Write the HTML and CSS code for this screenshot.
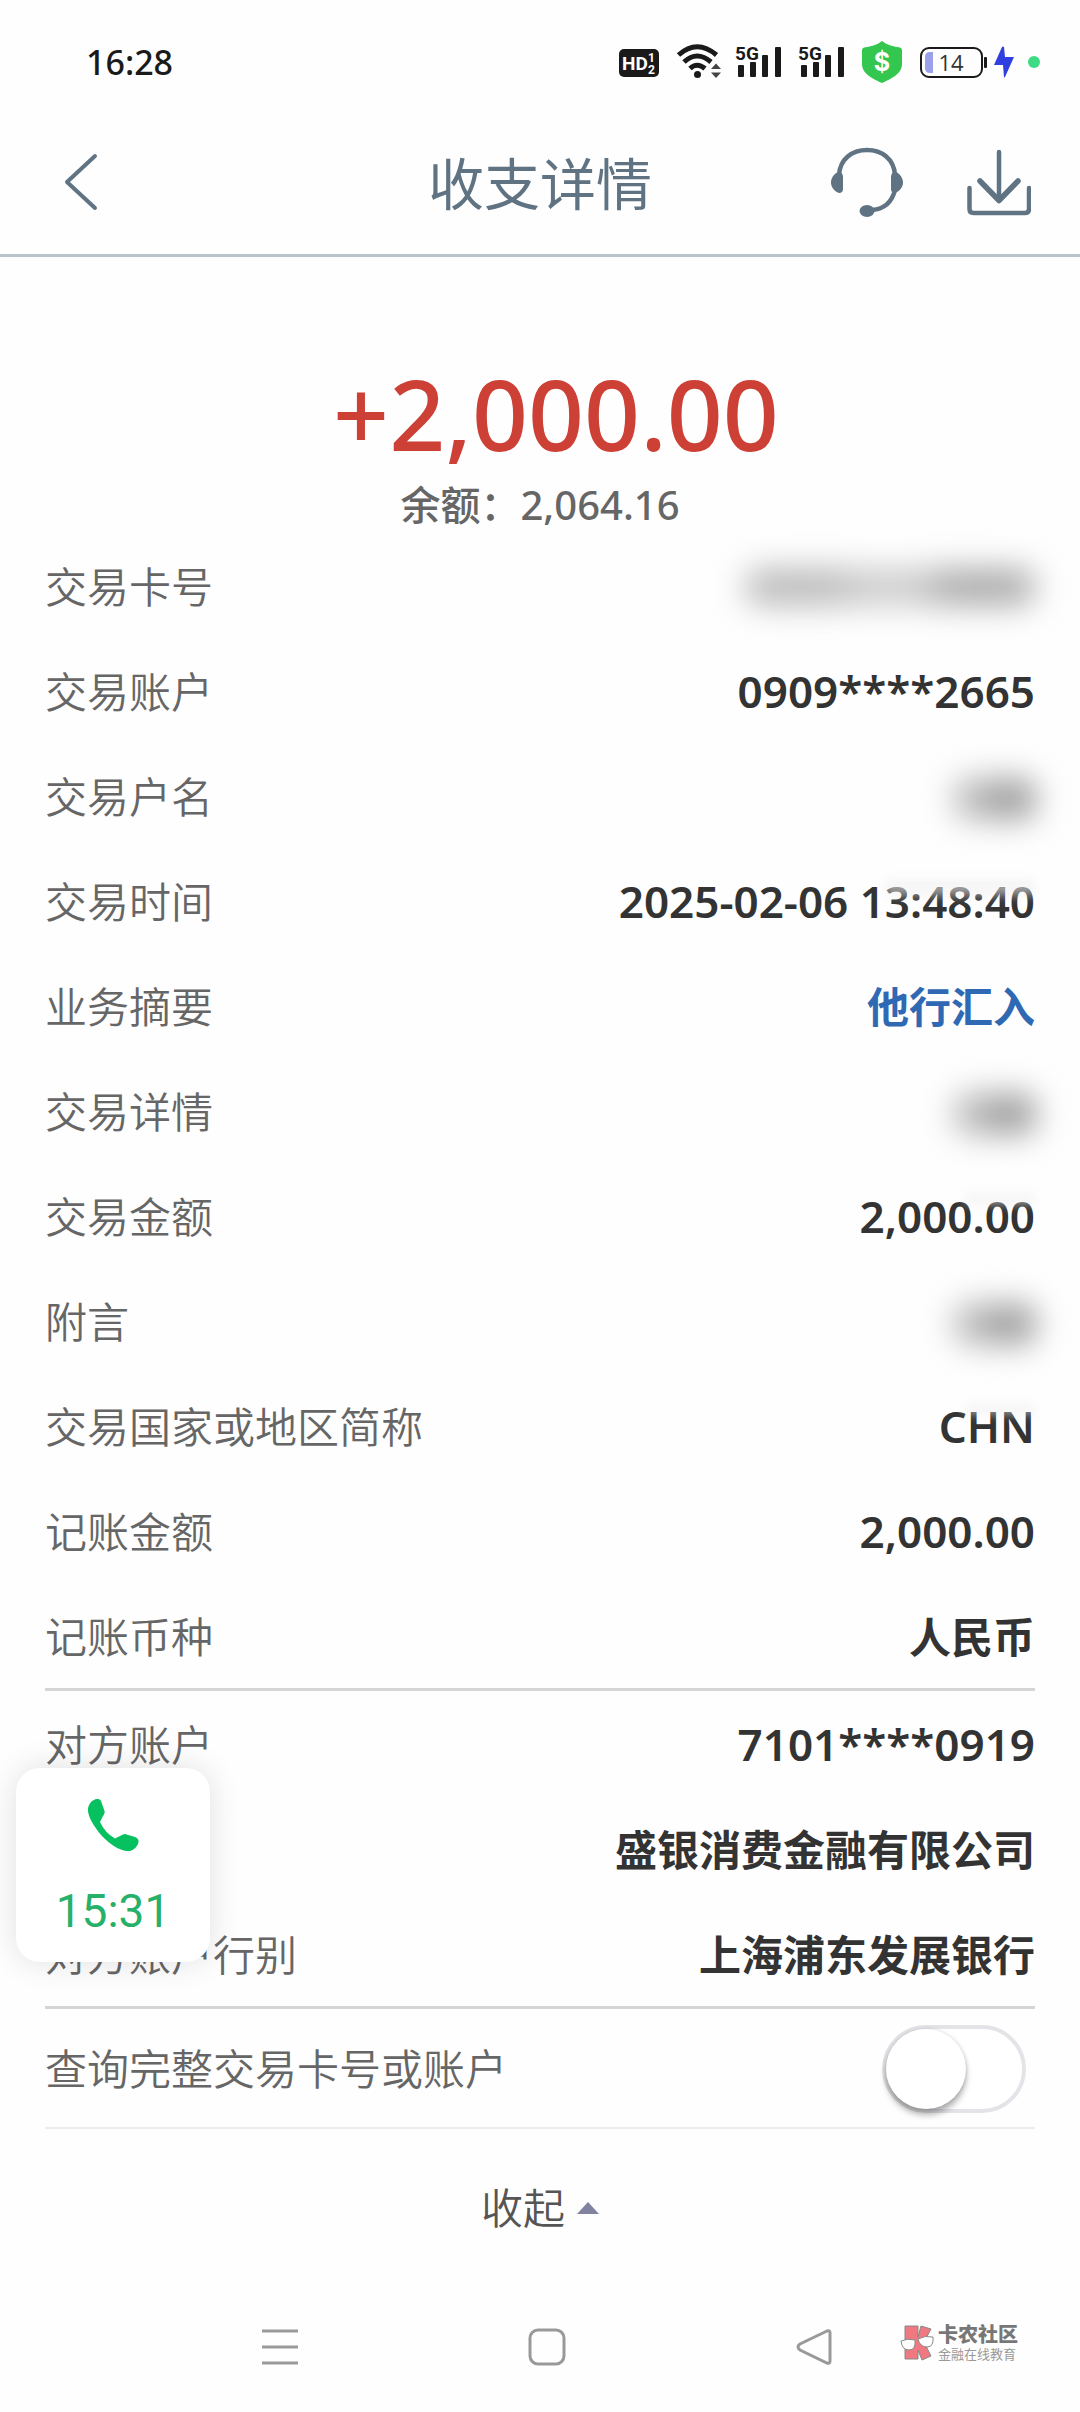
FILE: index.html
```html
<!DOCTYPE html>
<html lang="zh-CN">
<head>
<meta charset="utf-8">
<meta name="viewport" content="width=device-width, initial-scale=1">
<title>收支详情</title>
<link rel="stylesheet" href="styles.css">
</head>
<body>
<div class="status-bar">
  <time class="clock">16:28</time>
  <div class="status-icons">
    <svg width="42" height="44" viewBox="0 0 42 44" aria-hidden="true">
      <rect x="0" y="9" width="40" height="28" rx="5" fill="#1a1a1a"/>
      <text x="3" y="30" class="hd-text">HD</text>
      <text x="29" y="22" class="hd-small">1</text>
      <text x="29" y="34" class="hd-small">2</text>
    </svg>
    <svg width="42" height="44" viewBox="0 0 42 44" overflow="visible" aria-hidden="true">
      <g fill="none" stroke="#1a1a1a" stroke-width="5">
        <path d="M1.500 15Q20 -1.500 39.500 15"/>
        <path d="M7 22Q20 10 34 22"/>
        <path d="M13 28.500Q20 22 28 28.500"/>
      </g>
      <circle cx="20.500" cy="34.500" r="3.500" fill="#1a1a1a"/>
      <path d="M34 29h10l-5-5.500zM34 32.500h10l-5 5.500z" fill="#444"/>
    </svg>
    <svg width="47" height="44" viewBox="0 0 47 44" aria-hidden="true">
      <text x="0" y="20" class="net-text">5G</text>
      <g fill="#1a1a1a"><rect x="3" y="25" width="6" height="12" rx="1"/><rect x="15" y="22" width="6" height="15" rx="1"/><rect x="27" y="15" width="6" height="22" rx="1"/><rect x="40" y="7" width="6" height="30" rx="1"/></g>
    </svg>
    <svg width="47" height="44" viewBox="0 0 47 44" aria-hidden="true">
      <text x="0" y="20" class="net-text">5G</text>
      <g fill="#1a1a1a"><rect x="3" y="25" width="6" height="12" rx="1"/><rect x="15" y="22" width="6" height="15" rx="1"/><rect x="27" y="15" width="6" height="22" rx="1"/><rect x="40" y="7" width="6" height="30" rx="1"/></g>
    </svg>
    <svg width="43" height="44" viewBox="0 0 43 44" aria-hidden="true">
      <path d="M21 1C26 5 33 7 39 7.500Q41 8 41 10V24C41 34 30 39 21 43C12 39 1 34 1 24V10Q1 8 3 7.500C9 7 16 5 21 1Z" fill="#34c74f"/>
      <text x="21" y="31" class="shield-text">$</text>
    </svg>
    <div class="power">
      <svg width="67" height="44" viewBox="0 0 67 44" aria-hidden="true">
        <rect x="1" y="8" width="61" height="29" rx="8" fill="none" stroke="#1a1a1a" stroke-width="2"/>
        <path d="M10 12h3v21h-3q-5 0-5-5V17q0-5 5-5z" fill="#9aa0ea"/>
        <rect x="64" y="17" width="3" height="11" rx="1" fill="#1a1a1a"/>
        <text x="31" y="31" class="battery-text">14</text>
      </svg>
      <svg width="20" height="44" viewBox="0 0 20 44" aria-hidden="true">
        <path d="M8 7L0 25h9l1 12q0 1 1 0L20 17h-9L10 7q-1-1-2 0z" fill="#2f3fe0"/>
      </svg>
      <span class="live-dot"></span>
    </div>
  </div>
</div>

<header class="app-bar">
  <button class="icon-button back" type="button" aria-label="返回">
    <svg width="34" height="58" viewBox="0 0 34 58" aria-hidden="true"><path d="M31 3L3 29L31 55" fill="none" stroke="#5f7383" stroke-width="4" stroke-linecap="round" stroke-linejoin="round"/></svg>
  </button>
  <h1 class="title">收支详情</h1>
  <div class="actions">
    <button class="icon-button" type="button" aria-label="客服">
      <svg width="72" height="70" viewBox="0 0 72 70" aria-hidden="true">
        <path d="M8 28C9 12 21 3 36 3S63 12 64 28M64 43C61 55 53 62 41 63" fill="none" stroke="#5f7383" stroke-width="4.500"/>
        <path d="M7 25q5 0 5 5v12q0 4-4 4C3 44 0 40 0 35.500S3 27 7 25zM65 25q-5 0-5 5v12q0 4 4 4c5-2 8-6 8-10.500S69 27 65 25z" fill="#5f7383"/>
        <ellipse cx="36" cy="64" rx="7.500" ry="6" fill="#5f7383"/>
      </svg>
    </button>
    <button class="icon-button" type="button" aria-label="下载">
      <svg width="64" height="70" viewBox="0 0 64 70" fill="none" stroke="#5f7383" stroke-width="4.500" stroke-linecap="round" stroke-linejoin="round" aria-hidden="true">
        <path d="M2.500 41V62q0 4 4 4H58q4 0 4-4V41M32 5V52"/><path d="M13 34L32 53.500L51 34" stroke-width="5.500"/>
      </svg>
    </button>
  </div>
</header>

<main>
  <section class="summary">
    <p class="amount">+2,000.00</p>
    <p class="balance">余额：2,064.16</p>
  </section>

  <div class="details">
    <dl class="group">
      <div class="row"><dt>交易卡号</dt><dd><span class="redacted redacted-long"></span></dd></div>
      <div class="row"><dt>交易账户</dt><dd class="number">0909****2665</dd></div>
      <div class="row"><dt>交易户名</dt><dd><span class="redacted"></span></dd></div>
      <div class="row"><dt>交易时间</dt><dd class="number smudged smudged-wide">2025-02-06 13:48:40</dd></div>
      <div class="row"><dt>业务摘要</dt><dd class="highlight">他行汇入</dd></div>
      <div class="row"><dt>交易详情</dt><dd><span class="redacted"></span></dd></div>
      <div class="row"><dt>交易金额</dt><dd class="number smudged">2,000.00</dd></div>
      <div class="row"><dt>附言</dt><dd><span class="redacted"></span></dd></div>
      <div class="row"><dt>交易国家或地区简称</dt><dd class="number smudged">CHN</dd></div>
      <div class="row"><dt>记账金额</dt><dd class="number">2,000.00</dd></div>
      <div class="row"><dt>记账币种</dt><dd>人民币</dd></div>
    </dl>
    <dl class="group counterparty">
      <div class="row"><dt>对方账户</dt><dd class="number">7101****0919</dd></div>
      <div class="row"><dt></dt><dd>盛银消费金融有限公司</dd></div>
      <div class="row"><dt>对方账户行别</dt><dd>上海浦东发展银行</dd></div>
    </dl>
    <div class="toggle-row">
      <label for="full-number">查询完整交易卡号或账户</label>
      <input class="switch" type="checkbox" role="switch" id="full-number">
    </div>
    <button class="collapse" type="button">收起
      <svg width="22" height="12" viewBox="0 0 22 12" aria-hidden="true"><path d="M0 12L11 0L22 12Z" fill="#8082a0"/></svg>
    </button>
    <button class="call-bubble" type="button">
      <svg width="52" height="52" viewBox="0 0 52 52" aria-hidden="true"><path d="M7 1C10 -1 13 0 14 2L17.500 12C18 14 17 16 16 17L13 23Q18 34 28 39.500L34 36.500Q36 35 38 35L48 38Q52 39.500 51.500 43C51 47 47 51 43 52C36 53 24 47 15 37C6 27 0 16 1 9C2 5 4 2 7 1Z" fill="#07c160"/></svg>
      <span class="call-time">15:31</span>
    </button>
  </div>
</main>

<nav class="system-nav">
  <button class="icon-button" type="button" aria-label="最近任务"><svg width="36" height="38" viewBox="0 0 36 38" aria-hidden="true"><path d="M0 3H36M0 19H36M0 35H36" stroke="#999" stroke-width="3"/></svg></button>
  <button class="icon-button" type="button" aria-label="主页"><svg width="38" height="38" viewBox="0 0 38 38" aria-hidden="true"><rect x="2" y="2" width="34" height="34" rx="8" fill="none" stroke="#999" stroke-width="3"/></svg></button>
  <button class="icon-button" type="button" aria-label="后退"><svg width="36" height="38" viewBox="0 0 36 38" aria-hidden="true"><path d="M31 3L4 16Q0 19 4 22L31 35Q34 36 34 33V5Q34 2 31 3Z" fill="none" stroke="#999" stroke-width="3"/></svg></button>
  <div class="watermark">
    <svg width="34" height="36" viewBox="0 0 34 36" aria-hidden="true">
      <path d="M5 1H18V12L21 1L31 4L24 17L31 31L22 35L18 25V34H5Z" fill="#f07880" stroke="#888" stroke-width="1"/>
      <path d="M1 16Q7 13 15 15Q16 25 9 25Q2 25 1 16ZM18 14Q25 10 33 12Q34 22 27 22Q20 22 18 14Z" fill="#fff" stroke="#888" stroke-width="1"/>
    </svg>
    <div><p class="mark-name">卡农社区</p><p class="mark-tag">金融在线教育</p></div>
  </div>
</nav>
</body>
</html>
```
FILE: styles.css
```css
* { box-sizing: border-box; }

body {
  margin: 0;
  min-height: 100vh;
  background: #fefefe;
  color: #333;
  font-family: "Noto Sans", "Noto Sans CJK SC", sans-serif;
  font-size: 42px;
  line-height: 60px;
}

h1, p, dl, dd { margin: 0; }

svg { display: block; flex: none; }

button {
  padding: 0;
  border: 0;
  background: none;
  color: inherit;
  font: inherit;
}

/* Status bar */
.status-bar {
  display: flex;
  align-items: center;
  justify-content: space-between;
  height: 114px;
  padding: 10px 40px 0 86px;
}

.clock { font-size: 34px; font-weight: 500; color: #1a1a1a; }

.status-icons { display: flex; align-items: center; gap: 16px; }

.power { display: flex; align-items: center; gap: 7px; }

.live-dot {
  width: 12px;
  height: 12px;
  margin-left: 7px;
  border-radius: 50%;
  background: #3ddc84;
}

.hd-text { font: 700 19px Roboto, sans-serif; fill: #fff; }
.hd-small { font: 700 12px Roboto, sans-serif; fill: #fff; }
.net-text { font: 700 19px Roboto, sans-serif; fill: #1a1a1a; }
.shield-text { font: 700 25px Inter, sans-serif; fill: #fff; text-anchor: middle; }
.battery-text { font: 400 22px "Open Sans", sans-serif; fill: #333; text-anchor: middle; }

/* App bar */
.app-bar {
  display: grid;
  grid-template-columns: 1fr auto 1fr;
  align-items: center;
  height: 143px;
  padding: 0 49px 4px;
  border-bottom: 3px solid #b9c3ca;
  color: #5f7383;
}

.back { padding-left: 15px; justify-self: start; }

.title { padding-top: 2px; font-size: 56px; font-weight: 400; line-height: 80px; }

.actions { display: flex; justify-content: flex-end; gap: 64px; }

/* Amount summary */
.summary { padding-top: 108px; text-align: center; }

.amount {
  padding-left: 32px;
  color: #cc4036;
  font-size: 98px;
  font-weight: 500;
  line-height: 96px;
}

.balance { margin-top: 14px; color: #666; font-size: 40px; font-weight: 500; }

/* Detail rows */
.details { position: relative; padding: 0 45px; }

.group { border-bottom: 3px solid #d5d5d5; }

.row {
  display: flex;
  justify-content: space-between;
  padding: 22px 0 23px;
}

.row:last-child { padding-bottom: 21px; }

.counterparty { padding-top: 2px; }

dt, .toggle-row { color: #666; font-weight: 350; }

dd { position: relative; font-weight: 600; text-align: right; }

.number { font-size: 44px; line-height: 58px; }

.highlight { color: #2f69b3; }

.redacted {
  display: block;
  width: 82px;
  height: 40px;
  margin-top: 12px;
  border-radius: 16px;
  background: linear-gradient(90deg, #c4c4c4, #888);
  filter: blur(16px);
}

.redacted-long {
  width: 290px;
  height: 36px;
  background: linear-gradient(90deg, #b8b8b8 30%, #cacaca 40%, #cacaca 60%, #a8a8a8 70%);
}

.smudged::after {
  content: "";
  position: absolute;
  top: 2px;
  right: 0;
  width: 70px;
  height: 18px;
  background: linear-gradient(rgb(240 240 240 / 0), rgb(240 240 240 / .7) 60%, rgb(255 255 255 / 0));
  filter: blur(4px);
}

.smudged-wide::after {
  top: 0;
  width: 150px;
  height: 28px;
}

.toggle-row {
  display: flex;
  align-items: center;
  justify-content: space-between;
  height: 120px;
  padding: 2px 9px 0 0;
  border-bottom: 2px solid #ececec;
}

.switch {
  display: flex;
  width: 144px;
  height: 88px;
  margin: 0;
  border: 4px solid #e4e4e8;
  border-radius: 44px;
  appearance: none;
  background: #fff;
}

.switch::before {
  content: "";
  width: 80px;
  height: 80px;
  border-radius: 50%;
  background: #fff;
  box-shadow: 0 6px 6px rgb(0 0 0 / .3), 0 0 4px rgb(0 0 0 / .15);
}

.switch:checked { background: #4cd964; }
.switch:checked::before { margin-left: auto; }

.collapse {
  display: flex;
  align-items: center;
  justify-content: center;
  gap: 12px;
  width: 100%;
  height: 158px;
  color: #555;
  font-weight: 350;
}

/* Floating call window */
.call-bubble {
  position: absolute;
  left: 16px;
  top: 1233px;
  display: flex;
  flex-direction: column;
  align-items: center;
  gap: 30px;
  width: 194px;
  height: 194px;
  padding-top: 31px;
  border-radius: 24px;
  background: #fff;
  box-shadow: 0 0 32px rgb(0 0 0 / .12);
}

.call-time {
  color: #27b069;
  font-family: Roboto, sans-serif;
  font-size: 46px;
}

/* System navigation */
.system-nav {
  position: relative;
  display: grid;
  grid-template-columns: repeat(3, 1fr);
  place-items: center;
  height: 120px;
  padding: 0 132px 0 146px;
}

.watermark {
  position: absolute;
  right: 62px;
  top: 38px;
  display: flex;
  gap: 4px;
}

.mark-name { color: #777; font-size: 20px; font-weight: 900; line-height: 20px; }
.mark-tag { color: #999; font-size: 13px; line-height: 18px; }
```
